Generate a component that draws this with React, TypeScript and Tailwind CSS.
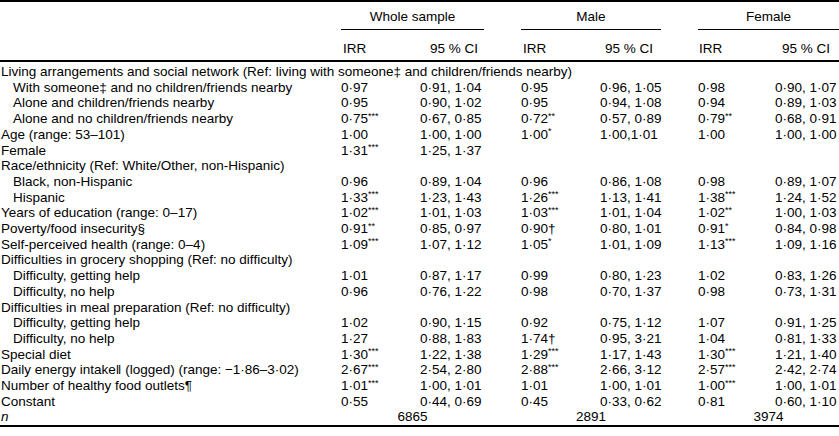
import React from 'react'

type Row = {
  label: React.ReactNode
  indent?: boolean
  cells?: string[]
}

const rows: Row[] = [
  { label: 'Living arrangements and social network (Ref: living with someone‡ and children/friends nearby)' },
  { label: 'With someone‡ and no children/friends nearby', indent: true, cells: ['0·97', '0·91, 1·04', '0·95', '0·96, 1·05', '0·98', '0·90, 1·07'] },
  { label: 'Alone and children/friends nearby', indent: true, cells: ['0·95', '0·90, 1·02', '0·95', '0·94, 1·08', '0·94', '0·89, 1·03'] },
  { label: 'Alone and no children/friends nearby', indent: true, cells: ['0·75***', '0·67, 0·85', '0·72**', '0·57, 0·89', '0·79**', '0·68, 0·91'] },
  { label: 'Age (range: 53–101)', cells: ['1·00', '1·00, 1·00', '1·00*', '1·00,1·01', '1·00', '1·00, 1·00'] },
  { label: 'Female', cells: ['1·31***', '1·25, 1·37', '', '', '', ''] },
  { label: 'Race/ethnicity (Ref: White/Other, non-Hispanic)' },
  { label: 'Black, non-Hispanic', indent: true, cells: ['0·96', '0·89, 1·04', '0·96', '0·86, 1·08', '0·98', '0·89, 1·07'] },
  { label: 'Hispanic', indent: true, cells: ['1·33***', '1·23, 1·43', '1·26***', '1·13, 1·41', '1·38***', '1·24, 1·52'] },
  { label: 'Years of education (range: 0–17)', cells: ['1·02***', '1·01, 1·03', '1·03***', '1·01, 1·04', '1·02**', '1·00, 1·03'] },
  { label: 'Poverty/food insecurity§', cells: ['0·91**', '0·85, 0·97', '0·90†', '0·80, 1·01', '0·91*', '0·84, 0·98'] },
  { label: 'Self-perceived health (range: 0–4)', cells: ['1·09***', '1·07, 1·12', '1·05*', '1·01, 1·09', '1·13***', '1·09, 1·16'] },
  { label: 'Difficulties in grocery shopping (Ref: no difficulty)' },
  { label: 'Difficulty, getting help', indent: true, cells: ['1·01', '0·87, 1·17', '0·99', '0·80, 1·23', '1·02', '0·83, 1·26'] },
  { label: 'Difficulty, no help', indent: true, cells: ['0·96', '0·76, 1·22', '0·98', '0·70, 1·37', '0·98', '0·73, 1·31'] },
  { label: 'Difficulties in meal preparation (Ref: no difficulty)' },
  { label: 'Difficulty, getting help', indent: true, cells: ['1·02', '0·90, 1·15', '0·92', '0·75, 1·12', '1·07', '0·91, 1·25'] },
  { label: 'Difficulty, no help', indent: true, cells: ['1·27', '0·88, 1·83', '1·74†', '0·95, 3·21', '1·04', '0·81, 1·33'] },
  { label: 'Special diet', cells: ['1·30***', '1·22, 1·38', '1·29***', '1·17, 1·43', '1·30***', '1·21, 1·40'] },
  { label: 'Daily energy intake‖ (logged) (range: −1·86–3·02)', cells: ['2·67***', '2·54, 2·80', '2·88***', '2·66, 3·12', '2·57***', '2·42, 2·74'] },
  { label: 'Number of healthy food outlets¶', cells: ['1·01***', '1·00, 1·01', '1·01', '1·00, 1·01', '1·00***', '1·00, 1·01'] },
  { label: 'Constant', cells: ['0·55', '0·44, 0·69', '0·45', '0·33, 0·62', '0·81', '0·60, 1·10'] },
]

const cols = 'grid grid-cols-[341px_79px_101px_79px_98px_77px_64px]'

function Value({ text }: { text: string }) {
  const m = text.match(/^(.*?)(\*+)$/)
  if (!m) return <>{text}</>
  return (
    <>
      {m[1]}
      <sup className="text-[9px]">{m[2]}</sup>
    </>
  )
}

export default function App() {
  return (
    <div className="w-[839px] h-[436px] bg-white text-black text-[13.5px] font-['Liberation_Sans',Arial,sans-serif]">
      <div className="border-t-2 border-b-2 border-black">
        {/* group headings */}
        <div className={`${cols} pt-[7px]`}>
          <div />
          <div className="col-span-2 mr-[37px]">
            <div className="text-center leading-4">Whole sample</div>
            <div className="mt-1 h-px bg-black" />
          </div>
          <div className="col-span-2 mr-[37px]">
            <div className="text-center leading-4">Male</div>
            <div className="mt-1 h-px bg-black" />
          </div>
          <div className="col-span-2">
            <div className="text-center leading-4">Female</div>
            <div className="mt-1 h-px bg-black" />
          </div>
        </div>
        {/* column headings */}
        <div className={`${cols} pt-[11px] pb-[3px] leading-4 border-b-2 border-black`}>
          <div />
          <div className="pl-[2px]">IRR</div>
          <div className="pl-[10px]">95 % CI</div>
          <div className="pl-[2px]">IRR</div>
          <div className="pl-[5px]">95 % CI</div>
          <div className="pl-[1px]">IRR</div>
          <div className="pl-[7px]">95 % CI</div>
        </div>

        {/* body */}
        <div className="pt-[2px] leading-[15.7px]">
          {rows.map((r, i) => (
            <div key={i} className={cols}>
              <div className={`whitespace-nowrap ${r.indent ? 'pl-[13px]' : 'pl-px'} ${r.cells ? '' : 'col-span-7'}`}>
                {r.label}
              </div>
              {r.cells?.map((c, j) => (
                <div key={j} className="whitespace-nowrap">
                  <Value text={c} />
                </div>
              ))}
            </div>
          ))}
          <div className={cols}>
            <div className="pl-px italic">n</div>
            <div className="col-span-2 mr-[37px] text-center">6865</div>
            <div className="col-span-2 mr-[37px] text-center">2891</div>
            <div className="col-span-2 text-center">3974</div>
          </div>
        </div>
      </div>
    </div>
  )
}
